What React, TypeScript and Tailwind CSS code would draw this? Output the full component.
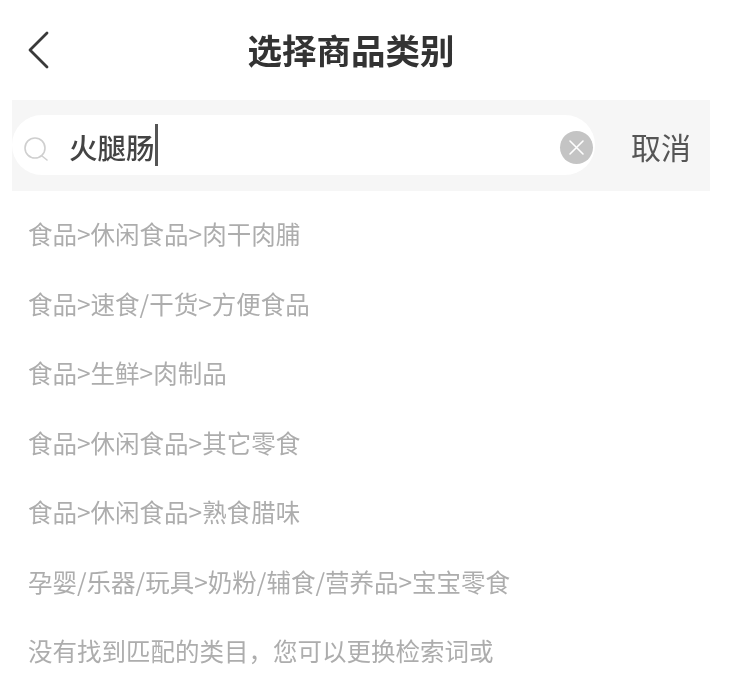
import React from 'react';

const categories = [
  '食品>休闲食品>肉干肉脯',
  '食品>速食/干货>方便食品',
  '食品>生鲜>肉制品',
  '食品>休闲食品>其它零食',
  '食品>休闲食品>熟食腊味',
  '孕婴/乐器/玩具>奶粉/辅食/营养品>宝宝零食',
  '没有找到匹配的类目，您可以更换检索词或',
];

const App: React.FC = () => {
  return (
    <div className="w-[750px] h-[689px] overflow-hidden bg-white font-['Noto_Sans_CJK_SC','Liberation_Sans',sans-serif]">
      <div className="relative h-[100px] flex items-start justify-center pt-[26px] pr-[48px]">
        <svg
          className="absolute left-[27px] top-[30px] blur-[0.4px]"
          width="24"
          height="40"
          viewBox="0 0 24 40"
          fill="none"
          stroke="#3a3a3a"
          strokeWidth="2.8"
          strokeLinecap="round"
          strokeLinejoin="round"
        >
          <path d="M20 3 L3 20 L20 37" />
        </svg>
        <h1 className="text-[34.5px] leading-[46px] font-bold text-[#333333] blur-[0.5px]">选择商品类别</h1>
      </div>

      <div className="mx-3 w-[698px] h-[91px] bg-[#f6f6f6] flex items-center">
        <div className="w-[583px] h-[60px] -mt-[2px] bg-white rounded-full flex items-center pl-[11px] pr-[2px] blur-[0.6px]">
          <svg
            className="mt-[8px]"
            width="26"
            height="26"
            viewBox="0 0 26 26"
            fill="none"
            stroke="#cfcfcf"
            strokeWidth="1.6"
            strokeLinecap="round"
          >
            <circle cx="12" cy="12" r="10" />
            <path d="M19 20 L24 24" />
          </svg>
          <span className="ml-[20px] mt-[4px] text-[28.5px] leading-[42px] font-medium text-[#444444]">火腿肠</span>
          <span className="w-[3px] h-[42px] mt-[1px] bg-[#555555]" />
          <span className="ml-auto mt-[6px] w-[33px] h-[33px] rounded-full bg-[#c4c4c4] flex items-center justify-center">
            <svg width="17" height="17" viewBox="0 0 17 17" stroke="#ffffff" strokeWidth="1.6" strokeLinecap="round">
              <path d="M2 2 L15 15 M15 2 L2 15" />
            </svg>
          </span>
        </div>
        <span className="ml-[36px] text-[30px] leading-[42px] text-[#555555] blur-[0.4px]">取消</span>
      </div>

      <ul className="mt-[9px] pl-[28px]">
        {categories.map((item) => (
          <li key={item} className="h-[69.5px] flex items-center text-[24.5px] text-[#adadad] whitespace-nowrap blur-[0.6px]">
            {item}
          </li>
        ))}
      </ul>
    </div>
  );
};

export default App;
